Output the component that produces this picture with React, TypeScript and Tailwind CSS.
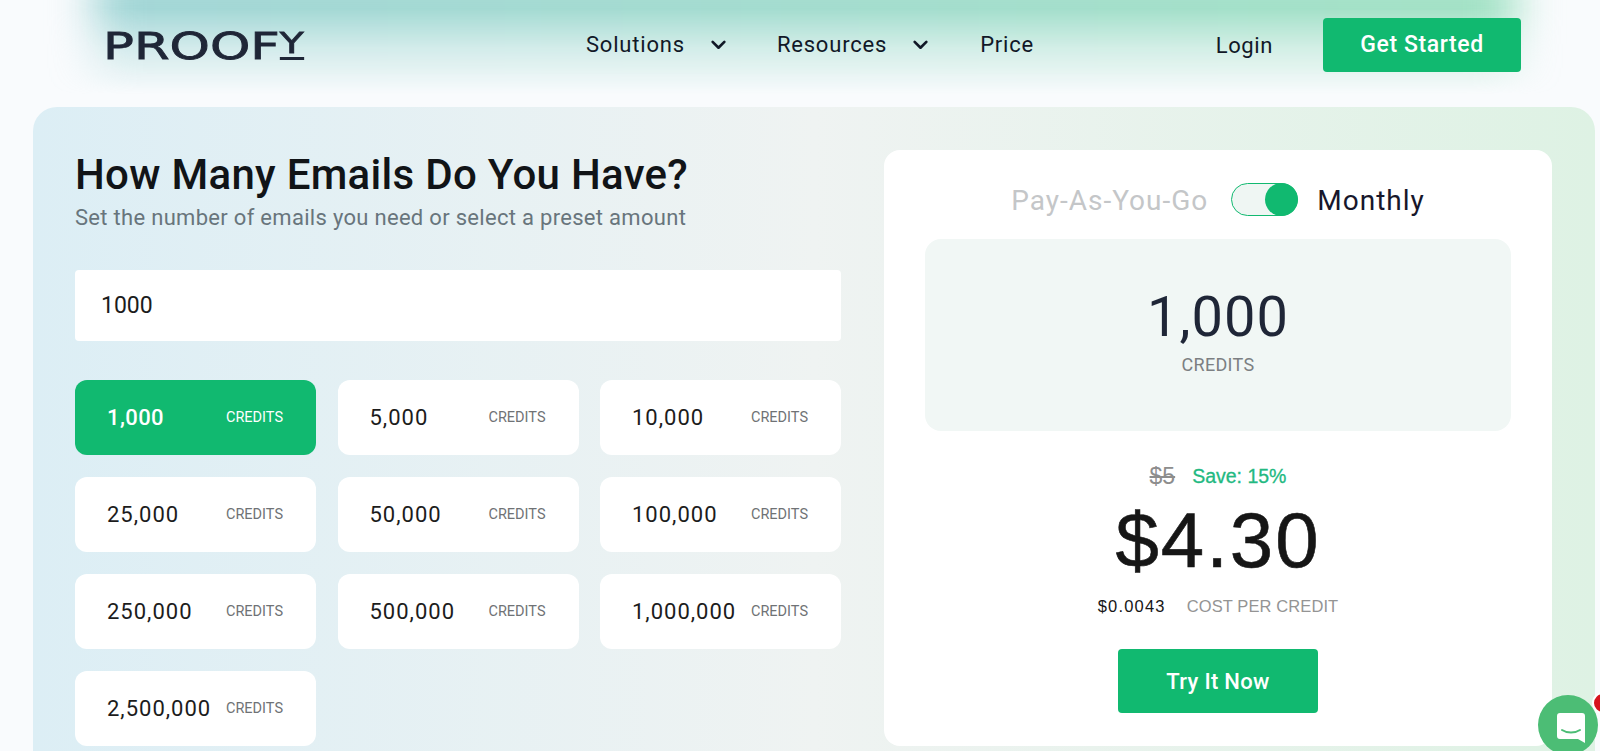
const PRESETS = ['1,000', '5,000', '10,000', '25,000', '50,000', '100,000', '250,000', '500,000', '1,000,000', '2,500,000'];

function Chevron() {
  return (
    <svg width="17" height="17" viewBox="0 0 16 16" fill="none" stroke="#111827" strokeWidth="2.5" strokeLinecap="round" strokeLinejoin="round">
      <path d="M2.5 5.5 8 11l5.5-5.5" />
    </svg>
  );
}

function Logo() {
  return (
    <div className="h-[28px] w-[200px] [font-family:'DejaVu_Sans',sans-serif] text-[#1f2637]">
      <div className="inline-flex items-start origin-left scale-x-[1.35] whitespace-nowrap text-[38px] leading-[28px] [-webkit-text-stroke:0.8px_#1f2637]">
        <span>PROOF</span>
        <span className="h-[28px] border-b-[3px] border-[#1f2637] text-[29px] leading-[23px]">Y</span>
      </div>
    </div>
  );
}

function PresetTile({ value, active }: { value: string; active: boolean }) {
  return (
    <button className={`h-[75px] rounded-xl pl-[32px] pr-[33px] flex items-center justify-between ${active ? 'bg-[#11b970] text-white' : 'bg-white text-[#1c1c1c]'}`}>
      <span className={`text-[22px] ${active ? 'font-medium tracking-[0.4px]' : 'tracking-[1px]'}`}>{value}</span>
      <span className={`text-[14.5px] ${active ? 'text-white' : 'text-[#6f7275]'}`}>CREDITS</span>
    </button>
  );
}

export default function App() {
  return (
    <div className="relative h-screen overflow-hidden bg-[#f9fbfd] [font-family:Roboto,sans-serif]">
      {/* blurred header glow */}
      <div className="absolute inset-x-0 top-0 h-[105px] [mask-image:linear-gradient(to_bottom,black_8%,rgba(0,0,0,0.45)_45%,transparent_90%)]">
        <div className="absolute left-[95px] right-[85px] -top-[40px] h-[160px] blur-[22px] bg-gradient-to-r from-[#a3d6d7] to-[#a3e2c5]" />
      </div>

      <header className="relative h-[107px] flex items-start">
        <div className="pl-[103px] pt-[32px]">
          <Logo />
        </div>
        <nav className="ml-[283px] pt-[28px] flex items-center text-[22px] tracking-[0.8px] text-[#111827]">
          <span>Solutions</span>
          <span className="ml-[25px]"><Chevron /></span>
          <span className="ml-[50px]">Resources</span>
          <span className="ml-[25px]"><Chevron /></span>
          <span className="ml-[51px]">Price</span>
        </nav>
        <div className="ml-auto pt-[18px] pr-[79px] flex items-center">
          <span className="text-[22px] tracking-[0.6px] text-[#111827] mr-[50px]">Login</span>
          <button className="w-[198px] h-[54px] bg-[#11b970] rounded text-white text-[23px] font-medium tracking-[0.6px]">Get Started</button>
        </div>
      </header>

      <main className="ml-[33px] mr-[5px] h-[700px] rounded-t-[24px] bg-gradient-to-r from-[#dceef5] via-[#eff3f2] to-[#def2e4] flex">
        <section className="w-[808px] pl-[42px] pt-[43px]">
          <h1 className="text-[42px] leading-[50px] font-medium text-[#111417] tracking-[0.3px]">How Many Emails Do You Have?</h1>
          <p className="mt-[4px] text-[22px] leading-[28px] text-[#68757c] tracking-[0.3px]">Set the number of emails you need or select a preset amount</p>
          <input readOnly value="1000" className="mt-[38px] block w-[766px] h-[71px] px-[26px] bg-white rounded text-[23px] text-[#1c1c1c] outline-none" />
          <div className="mt-[39px] w-[766px] grid grid-cols-3 gap-x-[21.5px] gap-y-[22px]">
            {PRESETS.map((p, i) => (
              <PresetTile key={p} value={p} active={i === 0} />
            ))}
          </div>
        </section>

        <section className="ml-[43px] mt-[43px] w-[668px] h-[596px] bg-white rounded-2xl px-[41px] flex flex-col items-center">
          <div className="mt-[31px] h-[40px] flex items-center text-[28px] tracking-[1px]">
            <span className="text-[#c4c6c8]">Pay-As-You-Go</span>
            <span className="relative ml-[23px] mr-[19px] mb-[3px] w-[67px] h-[33px] rounded-full border border-[#11b970] bg-[#eff6f3]">
              <span className="absolute -right-[1px] -top-[1px] w-[33px] h-[33px] rounded-full bg-[#11b970]" />
            </span>
            <span className="text-[#17172b]">Monthly</span>
          </div>
          <div className="mt-[18px] w-full h-[192px] rounded-2xl bg-[#f1f7f5] flex flex-col items-center">
            <div className="mt-[45px] text-[56px] leading-[66px] text-[#1f2637] tracking-[1px]">1,000</div>
            <div className="mt-[1px] text-[18px] tracking-[0.3px] text-[#7c7f82]">CREDITS</div>
          </div>
          <div className="mt-[30px] flex items-center [font-family:'Liberation_Sans',sans-serif] leading-[30px]">
            <span className="text-[#8d8d8d] text-[23px] line-through">$5</span>
            <span className="ml-[17px] text-[#22b981] text-[19.5px] [-webkit-text-stroke:0.3px_#22b981]">Save: 15%</span>
          </div>
          <div className="mt-[5px] [font-family:'Liberation_Sans',sans-serif] text-[78px] leading-[88px] tracking-[2px] text-[#161616] [-webkit-text-stroke:0.6px_#161616]">$4.30</div>
          <div className="mt-[9px] flex items-center [font-family:'Liberation_Sans',sans-serif] text-[16.5px] leading-[26px]">
            <span className="text-[#161616] tracking-[1.2px]">$0.0043</span>
            <span className="ml-[21px] text-[#949494] tracking-[0.1px]">COST PER CREDIT</span>
          </div>
          <button className="mt-[30px] w-[200px] h-[64px] rounded bg-[#11b970] text-white text-[22px] font-medium tracking-[0.3px]">Try It Now</button>
        </section>
      </main>

      {/* chat launcher */}
      <div className="absolute left-[1538px] top-[695px] w-[60px] h-[60px] rounded-full bg-[#4cbd75] flex items-center justify-center pl-[5px] pt-[5px]">
        <svg width="30" height="32" viewBox="0 0 30 32" fill="none">
          <path d="M4 1h22a3 3 0 0 1 3 3v27l-7-4H4a3 3 0 0 1-3-3V4a3 3 0 0 1 3-3z" fill="#fff" />
          <path d="M6 18c5 3.4 13 3.4 18 0" stroke="#4cbd75" strokeWidth="2" strokeLinecap="round" />
        </svg>
      </div>
      <div className="absolute left-[1592px] top-[692px] w-[22px] h-[22px] rounded-full bg-[#d7141e] border-2 border-white" />
    </div>
  );
}
